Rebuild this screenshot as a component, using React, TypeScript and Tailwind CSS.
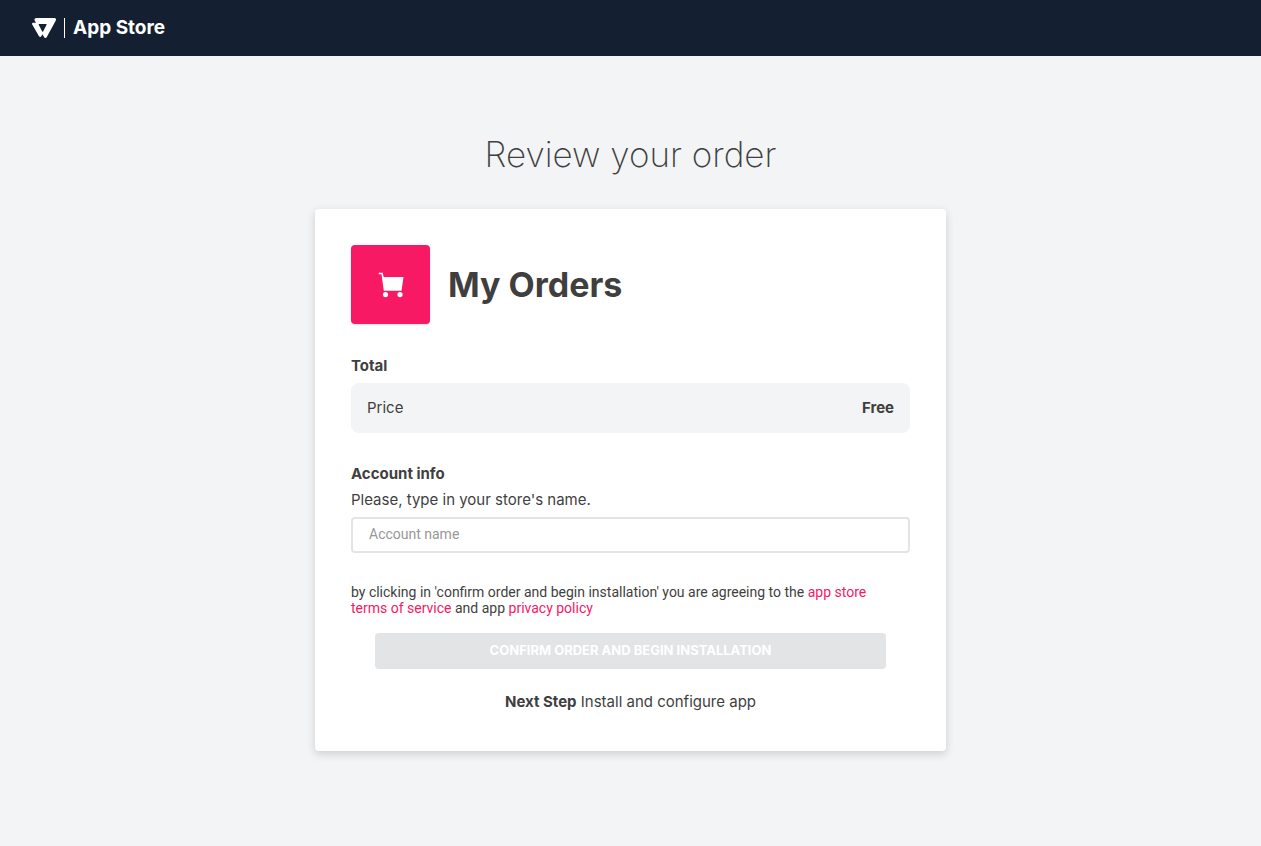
import React from "react";

function Logo() {
  return (
    <svg viewBox="0 0 24 20" className="h-5 w-6" fill="none" aria-hidden="true">
      <path
        fill="#fff"
        fillRule="evenodd"
        d="M4.2 0H22.4C23.7 0 24.4 1.300 23.800 2.400L14.800 19C14.200 20.200 12.600 20.200 12 19L10.500 16.200L9.300 18.300C8.800 19.200 7.600 19.200 7 18.200L0.200 6.600C-0.300 5.600 0.300 4.800 1.500 4.800H4L2.700 2.400C2.100 1.300 2.900 0 4.200 0ZM7.200 6C6.700 6 6.500 6.400 6.700 6.800L10.200 13.400C10.400 13.800 10.900 13.800 11.100 13.400L14.600 6.800C14.800 6.400 14.600 6 14.100 6Z"
      />
    </svg>
  );
}

function CartIcon() {
  return (
    <svg viewBox="0 0 26 26" className="h-[26px] w-[26px]" fill="#fff" aria-hidden="true">
      <path d="M0.800 0.800H4.800L5.600 5H25.500L23.500 18.800H5.800L3.500 2.200H0.800Z" />
      <circle cx="7.500" cy="22.600" r="2.600" />
      <circle cx="22" cy="22.600" r="2.600" />
    </svg>
  );
}

export default function App() {
  return (
    <div className="min-h-screen bg-[#f2f4f5] font-['Inter',sans-serif] text-[#3f3f40]">
      <header className="flex h-14 items-center bg-[#142032] px-8 text-white">
        <Logo />
        <span className="mx-2 h-5 w-px bg-white" />
        <span className="text-[19px] leading-6 font-bold">App Store</span>
      </header>
      <main className="flex flex-col items-center px-4 pt-[74px] pb-16">
        <h1 className="text-[35px] leading-12 font-extralight">Review your order</h1>
        <section className="mt-[31px] w-full max-w-[631px] rounded bg-white px-9 pt-9 pb-[37px] shadow-[0_3px_9px_rgba(61,62,64,0.2)]">
          <div className="flex items-center gap-[18px]">
            <div className="flex h-[79px] w-[79px] items-center justify-center rounded-sm bg-[#f71963] shadow">
              <CartIcon />
            </div>
            <h2 className="text-[34px] leading-10 font-bold">My Orders</h2>
          </div>
          <h3 className="mt-8 text-[15px] leading-5 font-bold">Total</h3>
          <div className="mt-[7px] flex h-[50px] items-center justify-between rounded-lg bg-[#f2f4f5] px-4 text-[15px]">
            <span>Price</span>
            <span className="font-bold">Free</span>
          </div>
          <h3 className="mt-[31px] text-[15px] leading-5 font-bold">Account info</h3>
          <label htmlFor="account" className="mt-1 block text-[15px] leading-6">
            Please, type in your store's name.
          </label>
          <input
            id="account"
            type="text"
            placeholder="Account name"
            className="mt-[5px] block h-9 w-full rounded border-2 border-[#e3e4e6] bg-white px-4 pb-0.5 font-['Roboto',sans-serif] text-sm placeholder:text-[#979899]"
          />
          <p className="mt-[31px] pr-4 font-['Roboto',sans-serif] text-sm leading-4">
            by clicking in 'confirm order and begin installation' you are agreeing to the{" "}
            <a href="#terms" className="text-[#f71963]">app store terms of service</a> and app{" "}
            <a href="#privacy" className="text-[#f71963]">privacy policy</a>
          </p>
          <div className="mt-[17px] px-6">
            <button
              type="button"
              disabled
              className="block h-9 w-full rounded-sm bg-[#e3e4e6] text-[13px] font-bold text-white uppercase"
            >
              Confirm order and begin installation
            </button>
          </div>
          <p className="mt-[21px] text-center text-[15px] leading-6">
            <strong>Next Step</strong> Install and configure app
          </p>
        </section>
      </main>
    </div>
  );
}
